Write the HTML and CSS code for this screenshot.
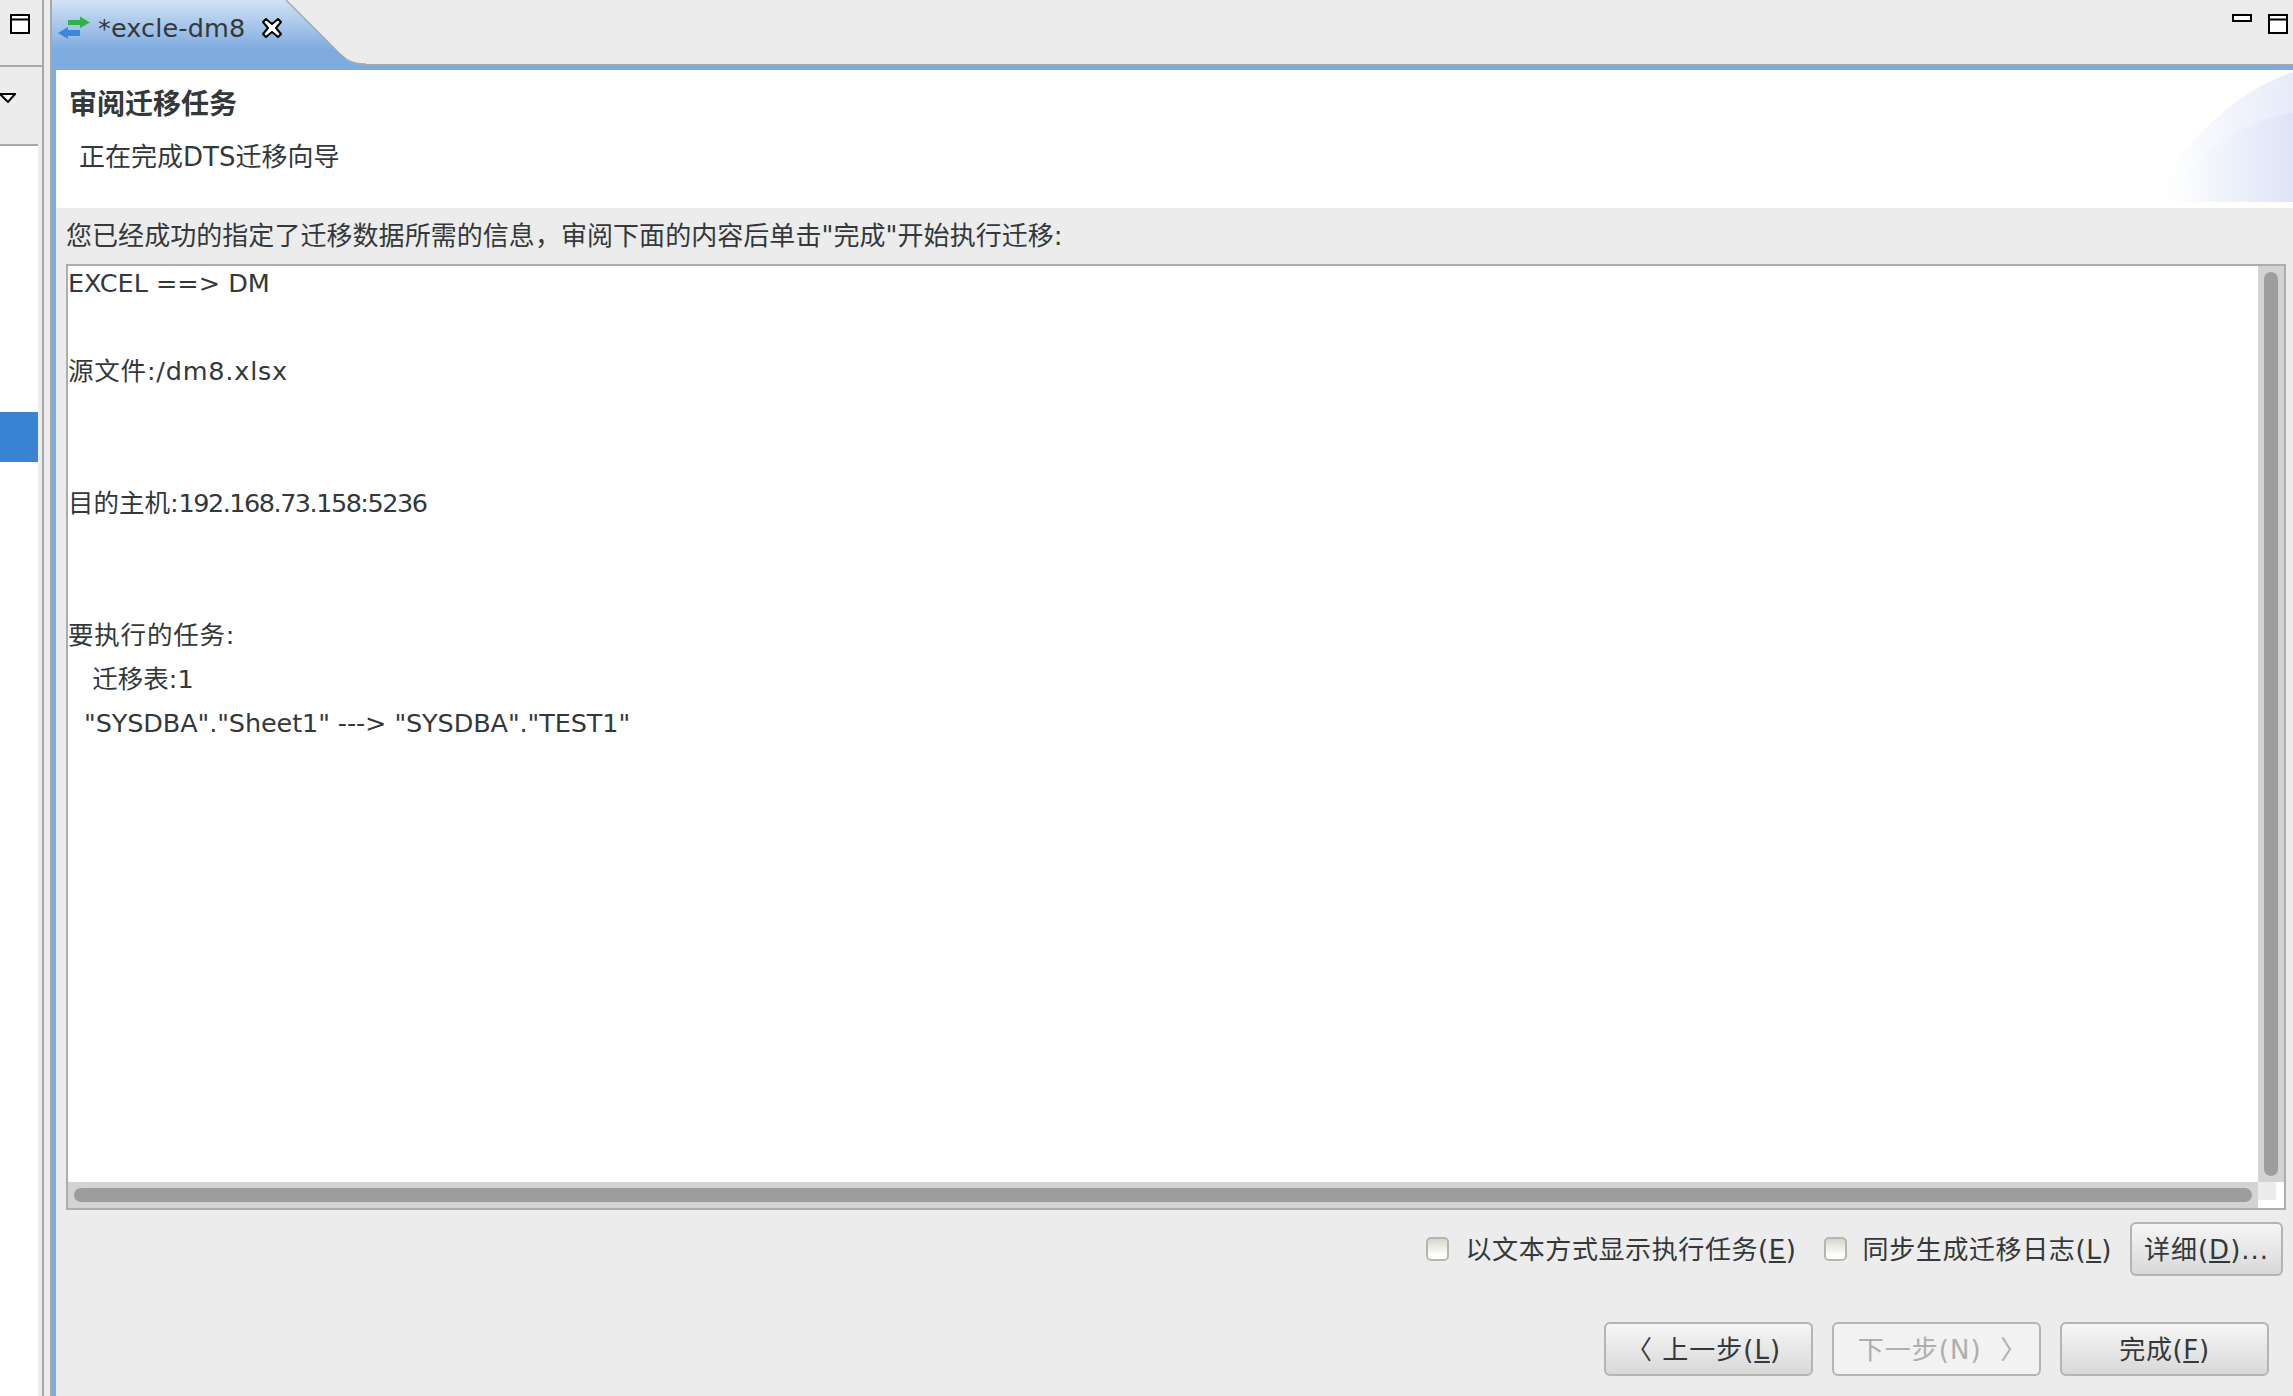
FILE: index.html
```html
<!DOCTYPE html>
<html lang="zh-CN">
<head>
<meta charset="utf-8">
<title>excle-dm8</title>
<link rel="stylesheet" href="styles.css">
</head>
<body>
<div class="app">
  <aside class="side">
    <div class="side-top">
      <svg class="ico-max" width="20" height="20" viewBox="0 0 20 20"><path d="M1 1h18v18H1zM1 5.5h18" fill="#fff" stroke="#000" stroke-width="2"/></svg>
    </div>
    <div class="side-tools">
      <svg class="ico-menu" width="16" height="10" viewBox="0 0 16 10"><path d="M0 1h15L8 9z" fill="#fff" stroke="#000" stroke-width="2"/></svg>
    </div>
    <div class="side-list"><div class="side-sel"></div></div>
  </aside>
  <main class="main">
    <header class="tabbar">
      <div class="tab">
        <svg class="tab-bg" width="314" height="70" viewBox="0 0 314 70">
          <defs><linearGradient id="tabg" x1="0" y1="0" x2="0" y2="1"><stop offset="0" stop-color="#d2e2f4"/><stop offset=".72" stop-color="#7dabe0"/><stop offset="1" stop-color="#7dabe0"/></linearGradient></defs>
          <path d="M0 0H234L286 52C294 60 300 64 312 64H314V70H0z" fill="url(#tabg)"/>
          <path d="M234 0L286 52C294 60 300 64 312 64H314" fill="none" stroke="#a8a8a8" stroke-width="1.5"/>
        </svg>
        <svg class="tab-ico" width="32" height="24" viewBox="0 0 32 24"><path d="M10 4h12V0.5L32 6.5 22 12V9H10z" fill="#2db34a"/><path d="M22 14H10v-3L0 17l10 6v-3h12z" fill="#3a87dc"/></svg>
        <span class="tab-title">*excle-dm8</span>
        <svg class="tab-close" width="22" height="22" viewBox="0 0 22 22"><path d="M2 5 5 2l6 5 6-5 3 3-5 6 5 6-3 3-6-5-6 5-3-3 5-6z" fill="#fff" stroke="#000" stroke-width="2" stroke-linejoin="round"/></svg>
      </div>
      <div class="win-btns">
        <svg width="20" height="8" viewBox="0 0 20 8"><rect x="1" y="1" width="18" height="6" fill="#fff" stroke="#000" stroke-width="2"/></svg>
        <svg width="20" height="20" viewBox="0 0 20 20"><path d="M1 1h18v18H1zM1 5.5h18" fill="#fff" stroke="#000" stroke-width="2"/></svg>
      </div>
    </header>
    <section class="wizard">
      <div class="wiz-head">
        <h1 class="wiz-title">审阅迁移任务</h1>
        <p class="wiz-sub">正在完成DTS迁移向导</p>
        <svg class="wiz-art" width="150" height="132" viewBox="0 0 150 132" preserveAspectRatio="none">
          <defs>
            <linearGradient id="art1" x1="0" y1="0" x2="1" y2="0"><stop offset="0" stop-color="#fff"/><stop offset=".15" stop-color="#fdfeff"/><stop offset="1" stop-color="#e6ebf8"/></linearGradient>
            <linearGradient id="art2" x1="0" y1="0" x2="1" y2="0"><stop offset="0" stop-color="#fff"/><stop offset=".5" stop-color="#eef2fb"/><stop offset="1" stop-color="#dde4f6"/></linearGradient>
          </defs>
          <path d="M7 132C30 90 80 25 150 2V132z" fill="url(#art1)"/>
          <path d="M25 132C45 95 90 50 150 43V132z" fill="url(#art2)"/>
        </svg>
      </div>
      <div class="wiz-body">
        <p class="intro">您已经成功的指定了迁移数据所需的信息，审阅下面的内容后单击"完成"开始执行迁移:</p>
        <div class="textbox">
          <div class="summary">
            <div class="line">EXCEL ==&gt; DM</div>
            <div class="line gap1 wide">源文件:/dm8.xlsx</div>
            <div class="line gap2">目的主机:<span class="num">192.168.73.158:5236</span></div>
            <div class="line gap2 wide">要执行的任务:</div>
            <div class="line">   迁移表:1</div>
            <div class="line tight">  "SYSDBA"."Sheet1" ---&gt; "SYSDBA"."TEST1"</div>
          </div>
          <div class="vbar"><div class="vthumb"></div></div>
          <div class="hbar"><div class="hthumb"></div></div>
          <div class="corner"></div>
        </div>
        <div class="options">
          <label class="check"><input type="checkbox"><span>以文本方式显示执行任务(<u>E</u>)</span></label>
          <label class="check"><input type="checkbox"><span>同步生成迁移日志(<u>L</u>)</span></label>
          <button class="btn btn-detail" type="button">详细(<u>D</u>)...</button>
        </div>
        <div class="nav">
          <button class="btn btn-nav btn-back" type="button">〈 上一步(<u>L</u>)</button>
          <button class="btn btn-nav btn-next" type="button" disabled>下一步(N)&nbsp;&nbsp;〉</button>
          <button class="btn btn-nav" type="button">完成(<u>F</u>)</button>
        </div>
      </div>
    </section>
  </main>
</div>
</body>
</html>
```
FILE: styles.css
```css
* { box-sizing: border-box; }
html, body { margin: 0; height: 100%; }
body {
  background: #ececec;
  color: #33383a;
  font-family: "DejaVu Sans", "Noto Sans CJK SC", sans-serif;
  font-size: 25.5px;
  overflow: hidden;
}
.app { display: flex; width: 2293px; height: 1396px; }

.side {
  width: 44px;
  flex: none;
  display: flex;
  flex-direction: column;
  border-right: 2px solid #a8a8a8;
}
.side-top {
  height: 67px;
  flex: none;
  border-bottom: 2px solid #a8a8a8;
  padding: 14px 0 0 10px;
}
.ico-max { display: block; }
.side-tools {
  width: 38px;
  height: 79px;
  flex: none;
  border-bottom: 2px solid #a8a8a8;
  padding-top: 26px;
}
.ico-menu { display: block; }
.side-list {
  width: 38px;
  flex: 1;
  background: #fff;
  padding-top: 266px;
}
.side-sel { height: 50px; background: #3a82d2; }

.main {
  margin-left: 6px;
  flex: 1;
  min-width: 0;
  display: flex;
  flex-direction: column;
  border-left: 2px solid #a8a8a8;
}
.tabbar {
  height: 65px;
  flex: none;
  display: flex;
  justify-content: space-between;
  border-bottom: 1px solid #a8a8a8;
}
.tab {
  position: relative;
  width: 314px;
  height: 65px;
  display: flex;
  align-items: flex-start;
}
.tab-bg { position: absolute; left: 0; top: 0; z-index: 1; }
.tab-ico { position: relative; z-index: 2; margin: 16px 0 0 6px; flex: none; }
.tab-title { position: relative; z-index: 2; margin: 12px 0 0 8px; line-height: 32px; white-space: nowrap; letter-spacing: .15px; }
.tab-close { position: relative; z-index: 2; margin: 17px 0 0 16px; flex: none; }
.win-btns {
  display: flex;
  align-items: flex-start;
  gap: 16px;
  padding: 14px 5px 0 0;
}
.win-btns svg { display: block; }

.wizard {
  flex: 1;
  display: flex;
  flex-direction: column;
  border-left: 4px solid #7dabe0;
  border-top: 5px solid #7dabe0;
  min-height: 0;
}
.wiz-head {
  position: relative;
  height: 138px;
  flex: none;
  background: #fff;
  padding: 0 0 0 13px;
}
.wiz-title {
  margin: 0;
  padding-top: 19px;
  font-size: 28px;
  font-weight: 700;
  line-height: 32px;
}
.wiz-sub {
  margin: 0;
  padding: 20px 0 0 10px;
  font-size: 26px;
  line-height: 32px;
}
.wiz-art { position: absolute; right: 0; top: 0; }

.wiz-body {
  flex: 1;
  min-height: 0;
  display: flex;
  flex-direction: column;
  padding: 0 0 0 10px;
}
.intro {
  margin: 0;
  height: 56px;
  padding-top: 12px;
  font-size: 26px;
  letter-spacing: .05px;
  line-height: 32px;
  white-space: pre;
}
.textbox {
  width: 2220px;
  height: 946px;
  flex: none;
  border: 2px solid #adadad;
  background: #fff;
  display: grid;
  grid-template-columns: 1fr 26px;
  grid-template-rows: 1fr 26px;
}
.summary {
  margin: -5px 0 0 0;
  overflow: hidden;
}
.line { height: 44px; line-height: 44px; white-space: pre; }
.gap1 { margin-top: 44px; }
.gap2 { margin-top: 88px; }
.wide { letter-spacing: .8px; }
.num { letter-spacing: -1.5px; }
.tight { letter-spacing: -.1px; }
.vbar {
  background: #d3d3d3;
  padding: 6px;
  display: flex;
}
.vthumb { flex: 1; background: #9c9d9e; border-radius: 7px; }
.hbar {
  background: #d3d3d3;
  padding: 6px;
  display: flex;
}
.hthumb { flex: 1; background: #9c9d9e; border-radius: 7px; }
.corner {
  background: #fff linear-gradient(#ececec, #ececec) no-repeat;
  background-size: 18px 18px;
}

.options {
  display: flex;
  align-items: center;
  justify-content: flex-end;
  height: 54px;
  margin-top: 12px;
  padding-right: 10px;
}
.check { display: flex; align-items: center; margin-right: 27px; }
.check span {
  margin-left: 16px;
  padding-bottom: 4px;
  font-size: 26px;
  letter-spacing: .6px;
  white-space: nowrap;
}
.check + .btn { margin-left: -9px; }
.check input {
  appearance: none;
  width: 23px;
  height: 24px;
  margin: 0;
  border: 2px solid #b4b8ac;
  border-radius: 5px;
  background: linear-gradient(#d4d8cc, #ffffff 80%);
}
.btn {
  font: inherit;
  font-size: 26px;
  color: inherit;
  height: 54px;
  padding: 0 0 4px;
  border: 2px solid #b3b5ae;
  border-radius: 6px;
  background: linear-gradient(#f6f6f6, #d8d8d8);
  white-space: nowrap;
  letter-spacing: .6px;
}
.btn:disabled { background: #f2f2f2; color: #aeaeae; }
.btn-detail { width: 153px; letter-spacing: 1px; }
.nav {
  display: flex;
  justify-content: flex-end;
  gap: 19px;
  margin-top: 46px;
  padding-right: 24px;
}
.btn-nav { width: 209px; }
.btn-back { letter-spacing: 1px; padding-right: 10px; }
.btn-next { letter-spacing: 1px; padding-left: 12px; }
```
